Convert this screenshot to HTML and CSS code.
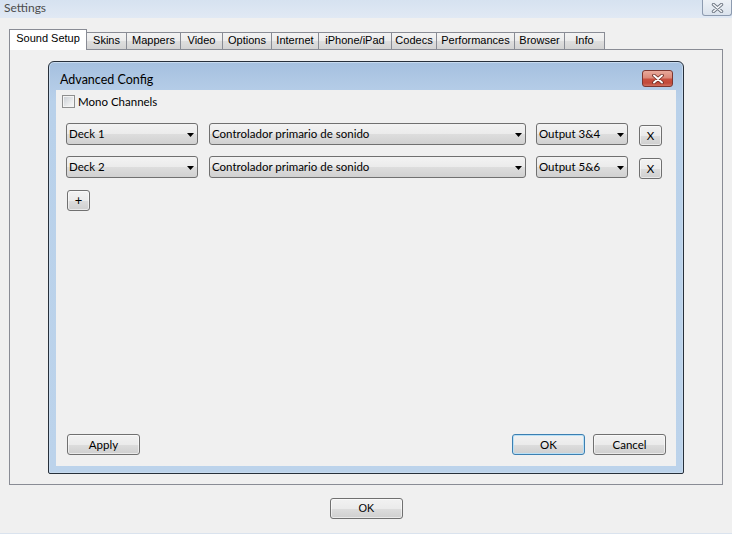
FILE: index.html
```html
<!DOCTYPE html>
<html>
<head>
<meta charset="utf-8">
<title>Settings</title>
<link rel="stylesheet" href="styles.css">
</head>
<body>
<div class="window">
  <div class="titlebar">
    <span class="title">Settings</span>
    <div class="close-btn">
      <svg width="13" height="10" viewBox="0 0 13 10"><path d="M2.5 1.5 L10.5 8.5 M10.5 1.5 L2.5 8.5" stroke="#6f7884" stroke-width="3.4" stroke-linecap="round"/><path d="M2.5 1.5 L10.5 8.5 M10.5 1.5 L2.5 8.5" stroke="#f4f6f9" stroke-width="1.6" stroke-linecap="round"/></svg>
    </div>
  </div>
  <div class="body">
    <div class="tabs">
      <div class="tab active">Sound Setup</div>
      <div class="tab">Skins</div>
      <div class="tab">Mappers</div>
      <div class="tab">Video</div>
      <div class="tab">Options</div>
      <div class="tab">Internet</div>
      <div class="tab">iPhone/iPad</div>
      <div class="tab">Codecs</div>
      <div class="tab">Performances</div>
      <div class="tab">Browser</div>
      <div class="tab">Info</div>
    </div>
    <div class="panel">
      <div class="dialog">
        <div class="dlg-title">
          <span class="dlg-caption">Advanced Config</span>
          <div class="dlg-close">
            <svg width="14" height="10" viewBox="0 0 14 10"><path d="M3 1.5 L11 8.5 M11 1.5 L3 8.5" stroke="#6b2a22" stroke-width="3.6" stroke-linecap="round"/><path d="M3 1.5 L11 8.5 M11 1.5 L3 8.5" stroke="#ffffff" stroke-width="1.9" stroke-linecap="round"/></svg>
          </div>
        </div>
        <div class="client">
          <label class="check"><span class="box"></span><span>Mono Channels</span></label>
          <div class="rows">
            <div class="row">
              <div class="select deck"><span class="val">Deck 1</span><span class="arrow"></span></div>
              <div class="select device"><span class="val">Controlador primario de sonido</span><span class="arrow"></span></div>
              <div class="select output"><span class="val">Output 3&amp;4</span><span class="arrow"></span></div>
              <button class="btn xbtn">X</button>
            </div>
            <div class="row">
              <div class="select deck"><span class="val">Deck 2</span><span class="arrow"></span></div>
              <div class="select device"><span class="val">Controlador primario de sonido</span><span class="arrow"></span></div>
              <div class="select output"><span class="val">Output 5&amp;6</span><span class="arrow"></span></div>
              <button class="btn xbtn">X</button>
            </div>
          </div>
          <button class="btn plus">+</button>
          <div class="spacer"></div>
          <div class="footer">
            <button class="btn wide">Apply</button>
            <div class="spacer-h"></div>
            <button class="btn wide default">OK</button>
            <button class="btn wide">Cancel</button>
          </div>
        </div>
      </div>
    </div>
    <div class="bottom">
      <button class="btn wide classic">OK</button>
    </div>
  </div>
</div>
</body>
</html>
```
FILE: styles.css
```css
* { box-sizing: border-box; }
html, body { margin: 0; padding: 0; }
body {
  width: 732px;
  height: 534px;
  overflow: hidden;
  background: #f0f0f0;
  font-family: "Liberation Sans", Arial, sans-serif;
  font-size: 11px;
  color: #000;
}
.window {
  width: 732px;
  height: 534px;
  display: flex;
  flex-direction: column;
  border-bottom: 1px solid #dae3ee;
}
.titlebar {
  height: 18px;
  flex: 0 0 18px;
  background: linear-gradient(#d6e2f0, #e1e9f4);
  display: flex;
  justify-content: space-between;
  align-items: flex-start;
}
.title {
  font-family: Lato, "Liberation Sans", sans-serif;
  font-size: 12px;
  line-height: 16px;
  color: #4c4c4c;
  padding-left: 4px;
}
.close-btn {
  width: 30px;
  height: 16px;
  margin-right: 0;
  border: 1px solid #8d9bb0;
  border-top: none;
  border-radius: 0 0 3px 3px;
  background: linear-gradient(#edf1f6, #dbe3ed);
  display: flex;
  align-items: center;
  justify-content: center;
}
.body {
  flex: 1;
  display: flex;
  flex-direction: column;
}
.tabs {
  display: flex;
  align-items: flex-end;
  height: 20px;
  margin: 11px 0 0 9px;
  position: relative;
  z-index: 1;
}
.tab {
  height: 17px;
  border: 1px solid #898c95;
  border-bottom: none;
  margin-right: -1px;
  line-height: 15px;
  text-align: center;
  white-space: nowrap;
  background: linear-gradient(#f3f3f3 0%, #ebebeb 50%, #dedede 51%, #d3d3d3 100%);
}
.tab:nth-child(1) { width: 78px; }
.tab:nth-child(2) { width: 41px; }
.tab:nth-child(3) { width: 55px; }
.tab:nth-child(4) { width: 43px; }
.tab:nth-child(5) { width: 50px; }
.tab:nth-child(6) { width: 48px; }
.tab:nth-child(7) { width: 74px; }
.tab:nth-child(8) { width: 46px; }
.tab:nth-child(9) { width: 79px; }
.tab:nth-child(10) { width: 51px; }
.tab:nth-child(11) { width: 41px; }
.tab.active {
  height: 21px;
  margin-bottom: -1px;
  line-height: 17px;
  background: #ffffff;
  position: relative;
  z-index: 2;
}
.panel {
  margin-left: 9px;
  width: 714px;
  height: 436px;
  border: 1px solid #898c95;
  background: #f0f0f0;
  padding: 11px 0 0 38px;
}
.dialog {
  width: 636px;
  height: 413px;
  border: 1px solid #27303b;
  border-radius: 6px 6px 2px 2px;
  background: linear-gradient(#a5c0df 0px, #b4cce7 27px, #b9d1ea 40px, #bcd3eb 100%);
  box-shadow: inset 0 0 0 1px #c8dbef;
  padding: 0 7px 7px;
  display: flex;
  flex-direction: column;
}
.dlg-title {
  height: 28px;
  flex: 0 0 28px;
  display: flex;
  justify-content: space-between;
  align-items: flex-start;
  padding: 0 3px 0 4px;
}
.dlg-caption {
  font-family: Lato, "Liberation Sans", sans-serif;
  font-size: 12.5px;
  line-height: 16px;
  padding-top: 10px;
  color: #000;
}
.dlg-close {
  margin-top: 8px;
  width: 31px;
  height: 17px;
  border: 1px solid #7c3630;
  border-radius: 3px;
  background: linear-gradient(#e9a99b 0%, #dc8a7a 45%, #c9503f 55%, #c2493a 80%, #d0705f 100%);
  display: flex;
  align-items: center;
  justify-content: center;
}
.client {
  flex: 1;
  background: #f0f0f0;
  display: flex;
  flex-direction: column;
  font-family: Lato, "Liberation Sans", sans-serif;
  font-size: 11.5px;
}
.check {
  display: flex;
  align-items: center;
  height: 13px;
  margin: 5px 0 0 6px;
  gap: 3px;
}
.box {
  width: 13px;
  height: 13px;
  border: 1px solid #8e8f8f;
  background: linear-gradient(135deg, #c7ccd2, #eeeff0 70%, #f7f7f7);
  box-shadow: inset 0 0 0 1px #f4f4f4;
}
.rows {
  display: flex;
  flex-direction: column;
  gap: 11px;
  margin: 15px 0 0 10px;
}
.row {
  display: flex;
  align-items: flex-start;
  height: 22px;
}
.select {
  height: 22px;
  border: 1px solid #707070;
  border-radius: 3px;
  background: linear-gradient(#f3f3f3 0%, #ebebeb 50%, #dddddd 51%, #d1d1d1 100%);
  display: flex;
  align-items: center;
  padding-left: 2px;
  white-space: nowrap;
}
.val { flex: 1; line-height: 14px; }
.arrow {
  width: 7px;
  height: 4px;
  margin: 2px 3px 0 0;
  background: #000;
  clip-path: polygon(0 0, 100% 0, 50% 100%);
}
.select.deck { width: 132px; }
.select.device { width: 317px; margin-left: 11px; }
.select.output { width: 92px; margin-left: 10px; }
.btn {
  height: 21px;
  padding: 0;
  border: 1px solid #707070;
  border-radius: 3px;
  background: linear-gradient(#f2f2f2 0%, #ebebeb 50%, #dddddd 51%, #cfcfcf 100%);
  box-shadow: inset 0 0 0 1px rgba(255,255,255,0.55);
  font-family: Lato, "Liberation Sans", sans-serif;
  font-size: 11.5px;
  color: #000;
  line-height: 17px;
  text-align: center;
}
.xbtn { width: 23px; margin: 2px 0 0 11px; }
.plus { width: 23px; margin: 12px 0 0 11px; font-size: 13px; }
.spacer { flex: 1; }
.footer {
  display: flex;
  align-items: flex-end;
  padding: 0 10px 11px 11px;
  gap: 8px;
}
.spacer-h { flex: 1; }
.wide { width: 73px; }
.default {
  border-color: #3c7fb1;
  box-shadow: inset 0 0 0 1px #b9e0f6;
}
.bottom {
  display: flex;
  justify-content: center;
  padding: 13px 0 0 1px;
}
.classic {
  font-family: "Liberation Sans", Arial, sans-serif;
  font-size: 11px;
}
```
